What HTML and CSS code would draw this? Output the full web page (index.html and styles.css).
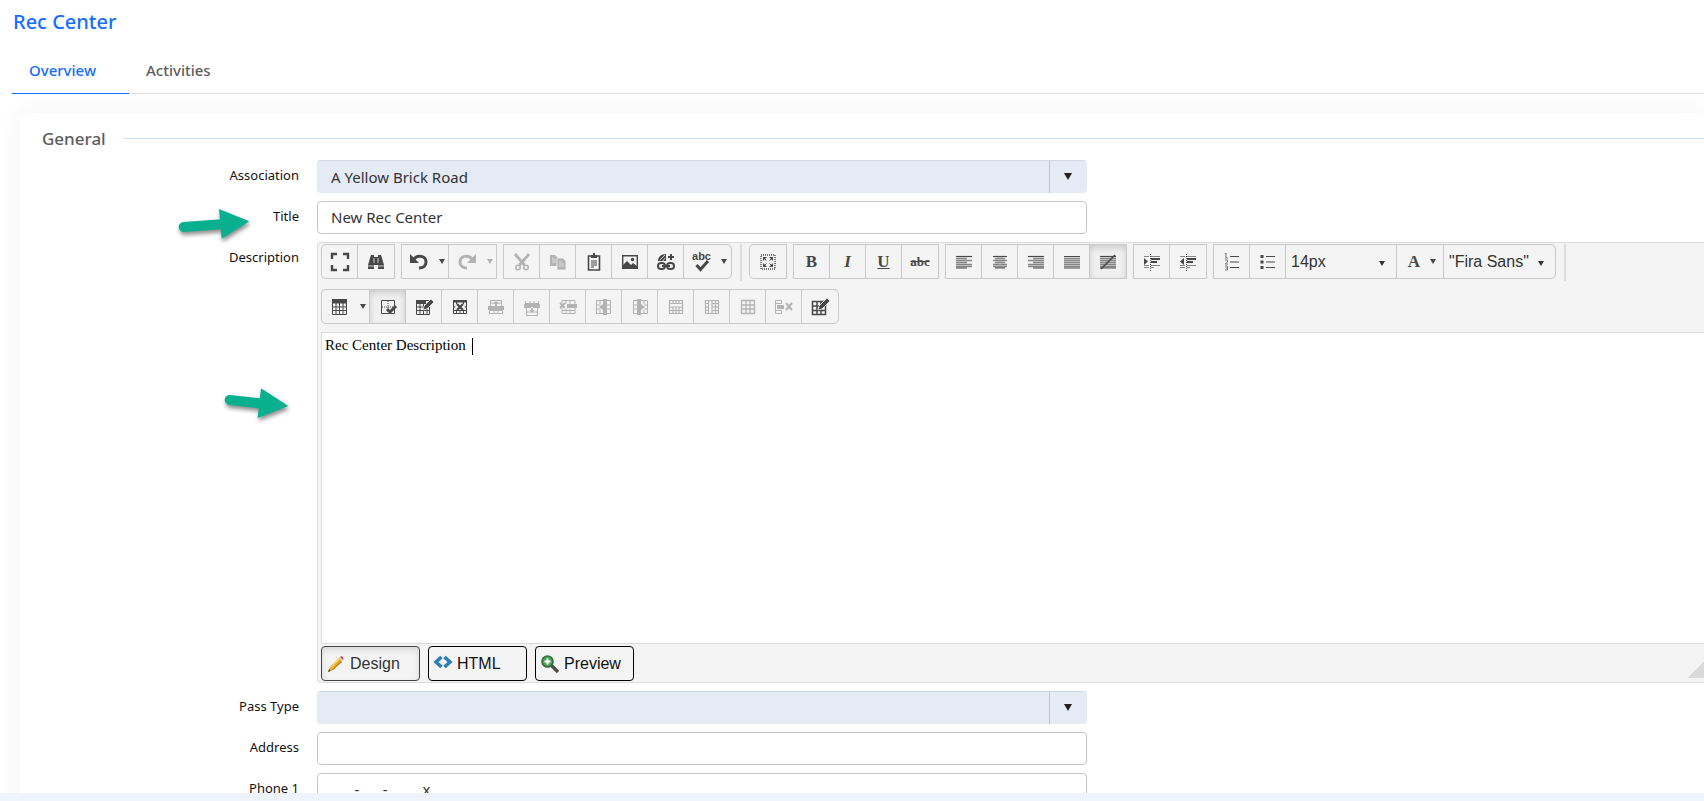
FILE: index.html
```html
<!DOCTYPE html>
<html lang="en">
<head>
  <meta charset="UTF-8">
  <title>Rec Center</title>
  <link rel="stylesheet" href="styles.css">
</head>
<body>

  <!-- icon sprite -->
  <svg class="sprite" aria-hidden="true">
    <symbol id="i-full" viewBox="0 0 20 20"><path d="M7 2H2v5M13 2h5v5M7 18H2v-5M13 18h5v-5" fill="none" stroke="currentColor" stroke-width="2.4"/></symbol>
    <symbol id="i-find" viewBox="0 0 20 20"><path d="M5 3h3v2h4V3h3l1 3 2 7v4h-6v-4H8v4H2v-4l2-7z"/><path d="M8 6v5M12 6v5M2 14h6M12 14h6" stroke="#f4f4f4" stroke-width=".8"/></symbol>
    <symbol id="i-undo" viewBox="0 0 20 20"><path d="M5 7c3-4 12-4 12 3 0 4-3 6-7 6" fill="none" stroke="currentColor" stroke-width="3"/><path d="M1 2v9h9z"/></symbol>
    <symbol id="i-redo" viewBox="0 0 20 20"><path d="M15 7C12 3 3 3 3 10c0 4 3 6 7 6" fill="none" stroke="currentColor" stroke-width="3"/><path d="M19 2v9h-9z"/></symbol>
    <symbol id="i-cut" viewBox="0 0 20 20"><path d="M3 2l9.500 11M17 2L7.500 13" fill="none" stroke="currentColor" stroke-width="2.800"/><circle cx="6" cy="15.500" r="2.200" fill="none" stroke="currentColor" stroke-width="1.600"/><circle cx="14" cy="15.500" r="2.200" fill="none" stroke="currentColor" stroke-width="1.600"/></symbol>
    <symbol id="i-copy" viewBox="0 0 20 20"><path d="M2 3h5l3 3v8H2z"/><path d="M9 6h6l3 3v9H9z" stroke="#f4f4f4" stroke-width=".8"/><path d="M4 6h2M4 8h4M4 10h4M11 10h3M11 12h5M11 14h5" stroke="#f4f4f4" stroke-width=".7"/></symbol>
    <symbol id="i-paste" viewBox="0 0 20 20"><path d="M4.500 4h11v14h-11z" fill="none" stroke="currentColor" stroke-width="1.600"/><path d="M7 6V3h2V1h2v2h2v3z"/><path d="M7 9h6M7 11h6M7 13h6M7 15h3" stroke="currentColor" stroke-width="1.200"/></symbol>
    <symbol id="i-image" viewBox="0 0 20 20"><path d="M2.700 3.700h14.600v12.600H2.700z" fill="none" stroke="currentColor" stroke-width="1.400"/><path d="M3 16v-3l4-4 4 4 2-2 4 3v2z"/><circle cx="12.500" cy="7.500" r="1.700"/></symbol>
    <symbol id="i-link" viewBox="0 0 20 20"><path d="M2 9c0-4 3-7 8-7v7z"/><path d="M4 8l5-5M7 9l2-3" stroke="#f4f4f4" stroke-width=".8"/><path d="M15 2v6M12 5h6" stroke="currentColor" stroke-width="2"/><rect x="2" y="11" width="7" height="6" rx="3" fill="none" stroke="currentColor" stroke-width="2"/><rect x="11" y="11" width="7" height="6" rx="3" fill="none" stroke="currentColor" stroke-width="2"/><path d="M6 14h8" stroke="currentColor" stroke-width="2"/></symbol>
    <symbol id="i-check" viewBox="0 0 16 12"><path d="M2.500 5l4 4.500L14 1" fill="none" stroke="currentColor" stroke-width="3"/></symbol>
    <symbol id="i-all" viewBox="0 0 20 20"><path d="M3 3h14v14H3z" fill="none" stroke="currentColor" stroke-width="1.400" stroke-dasharray="1 1"/><path d="M5 9V5h4zM15 9V5h-4zM5 11v4h4zM15 11v4h-4z"/><path d="M6 6l8 8M14 6l-8 8" stroke="currentColor" stroke-dasharray="3.500 4.300"/></symbol>
    <symbol id="i-left" viewBox="0 0 20 20"><path d="M2 4.500h16" stroke="currentColor" stroke-width="1.200"/><path d="M2 6.500h11M2 8.500h16M2 10.500h11M2 12.500h16M2 14.500h16M2 16h11" stroke="#858585" stroke-width="1.300"/></symbol>
    <symbol id="i-center" viewBox="0 0 20 20"><path d="M3 4.500h14" stroke="currentColor" stroke-width="1.200"/><path d="M5 6.500h10M3 8.500h14M5 10.500h10M3 12.500h14M3 14.500h14M5 16h10" stroke="#858585" stroke-width="1.300"/></symbol>
    <symbol id="i-right" viewBox="0 0 20 20"><path d="M2 4.500h16" stroke="currentColor" stroke-width="1.200"/><path d="M7 6.500h11M2 8.500h16M7 10.500h11M2 12.500h16M2 14.500h16M7 16h11" stroke="#858585" stroke-width="1.300"/></symbol>
    <symbol id="i-justify" viewBox="0 0 20 20"><path d="M2 4.500h16M2 16h16" stroke="currentColor" stroke-width="1.200"/><path d="M2 6.500h16M2 8.500h16M2 10.500h16M2 12.500h16M2 14.500h16" stroke="#858585" stroke-width="1.600"/></symbol>
    <symbol id="i-none" viewBox="0 0 20 20"><path d="M2 4.500h16" stroke="currentColor" stroke-width="1.200"/><path d="M2 6.500h16M2 8.500h16M2 10.500h16M2 12.500h16M2 14.500h16M2 16h16" stroke="#858585" stroke-width="1.300"/><path d="M3 17L17 3" stroke="currentColor" stroke-width="1.600"/></symbol>
    <symbol id="i-indent" viewBox="0 0 20 20"><path d="M2 4.500h5M2 13.500h5M2 15.500h5M9 4.500h9M9 13.500h9M9 15.500h3" stroke="#858585"/><path d="M9 7h9M9 10h6" stroke="currentColor" stroke-width="2"/><path d="M8.500 2v17" stroke="currentColor" stroke-dasharray="1 1"/><path d="M2 6l4 3.500L2 13z"/></symbol>
    <symbol id="i-outdent" viewBox="0 0 20 20"><path d="M2 4.500h5M2 13.500h5M2 15.500h5M9 4.500h9M9 13.500h9M9 15.500h3" stroke="#858585"/><path d="M9 7h9M9 10h6" stroke="currentColor" stroke-width="2"/><path d="M8.500 2v17" stroke="currentColor" stroke-dasharray="1 1"/><path d="M6 6L2 9.500 6 13z"/></symbol>
    <symbol id="i-ol" viewBox="0 0 20 20"><path d="M8 4.500h9M8 10h9M8 15.500h9" stroke="currentColor" stroke-width="1.200"/><path d="M3 2l1-1v5M3 6h3M3 8h2.500v2L3 12h3M3 14h2.500v4H3M3.500 16H5" fill="none" stroke="#777"/></symbol>
    <symbol id="i-ul" viewBox="0 0 20 20"><path d="M8 4.500h9M8 10h9M8 15.500h9" stroke="currentColor" stroke-width="1.200"/><path d="M2.500 3h3v3h-3zM2.500 8.500h3v3h-3zM2.500 14h3v3h-3z"/></symbol>
    <symbol id="i-table" viewBox="0 0 20 20"><path d="M2.500 2.500h14v15h-14zM2.500 10h14M2.500 13.500h14M6 6v11.500M9.500 6v11.500M13 6v11.500" fill="none" stroke="currentColor"/><path d="M2 2h15v4.500H2z"/></symbol>
    <symbol id="i-tcheck" viewBox="0 0 20 20"><path d="M3.500 3.500h13v13h-13z" fill="none" stroke="currentColor"/><path d="M10 4v12M4 10h12" stroke="currentColor" stroke-dasharray="1 1"/><path d="M9 12l3 3 6-6" fill="none" stroke="currentColor" stroke-width="3"/></symbol>
    <symbol id="i-tedit" viewBox="0 0 20 20"><path d="M2.500 3.500h13v14h-13zM2.500 10h13M2.500 13.500h13M6 6v11M9.500 6v11M13 6v11" fill="none" stroke="currentColor"/><path d="M2 3h10v4H2z"/><path d="M9 13l1-4 7-7 3 3-7 7z" stroke="#f4f4f4" stroke-width=".8"/></symbol>
    <symbol id="i-tdel" viewBox="0 0 20 20"><path d="M3.500 3.500h13v13h-13zM3.500 13.500h13M6.500 4v3M13.500 4v3M6.500 13v4M10 14v3M13.500 13v4M3.500 10h2M14.500 10h2" fill="none" stroke="currentColor"/><path d="M3 3h14v2.500H3z"/><path d="M7 7l6 6M13 7l-6 6" stroke="currentColor" stroke-width="2.200"/></symbol>
    <symbol id="i-rowup" viewBox="0 0 20 20"><path d="M4.500 9V3.500h11V9M3.500 13.500h13v3h-13zM8 13v4M12 13v4M4.500 6h11" fill="none" stroke="currentColor"/><path d="M2 9h16v4H2zM7.500 7L10 4l2.500 3H11v3H9V7z"/></symbol>
    <symbol id="i-rowdown" viewBox="0 0 20 20"><path d="M3.500 6.500h13M4.500 11v7.500h11V11M8 4v3M12 4v3M3.500 4v3M16.500 4v3M4.500 15h11" fill="none" stroke="currentColor"/><path d="M2 7h16v4H2zM7.500 13l2.500 3 2.500-3H11v-3H9v3z"/></symbol>
    <symbol id="i-rowdel" viewBox="0 0 20 20"><path d="M4 3.500h13v13H4zM4 13.500h13M8 4v3M12 4v3M8 12v5M12 12v5" fill="none" stroke="currentColor"/><path d="M9 7h10v4H9z"/><path d="M2 6l5 5M7 6l-5 5" stroke="currentColor" stroke-width="1.800"/></symbol>
    <symbol id="i-colleft" viewBox="0 0 20 20"><path d="M2.500 3.500h14v13h-14zM2.500 8h4M2.500 12h4M13 8h4M13 12h4M6 4v3M6 13v3" fill="none" stroke="currentColor"/><path d="M9 2h4v16H9zM9 7l-4 3 4 3z"/></symbol>
    <symbol id="i-colright" viewBox="0 0 20 20"><path d="M3.500 3.500h14v13h-14zM3.500 8h4M3.500 12h4M14 8h4M14 12h4M14 4v3M14 13v3" fill="none" stroke="currentColor"/><path d="M7 2h4v16H7zM11 7l4 3-4 3z"/></symbol>
    <symbol id="i-merge" viewBox="0 0 20 20"><path d="M3.500 3.500h13v13h-13zM3.500 6.500h13M3.500 13.500h13M3.500 10h13M7 3v3.500M10 3v3.500M13 3v3.500M7 10v7M10 10v7M13 10v7" fill="none" stroke="currentColor" stroke-width="1.200"/></symbol>
    <symbol id="i-mergev" viewBox="0 0 20 20"><path d="M3.500 3.500h13v13h-13zM6.500 3v14M10 3v14M13.500 3v14M3.500 6.500h3M3.500 10h3M3.500 13.500h3M10 6.500h7M10 10h7M10 13.500h7" fill="none" stroke="currentColor" stroke-width="1.200"/></symbol>
    <symbol id="i-split" viewBox="0 0 20 20"><path d="M3.500 3.500h13v13h-13zM8 3v14M12 3v14M3.500 8h13M3.500 12h13" fill="none" stroke="currentColor" stroke-width="1.300"/></symbol>
    <symbol id="i-celldel" viewBox="0 0 20 20"><path d="M1.500 3.500h6v3h-6zM1.500 13.500h6v3h-6zM1.500 6.500v7" fill="none" stroke="currentColor"/><path d="M3 8h7v4H3z"/><path d="M12 6l6 7M18 6l-6 7" stroke="currentColor" stroke-width="2"/></symbol>
    <symbol id="i-tprop" viewBox="0 0 20 20"><path d="M2.500 4.500h13v13h-13zM2.500 9h13M2.500 13.500h13M7 4v13M11 4v13" fill="none" stroke="currentColor" stroke-width="1.500"/><path d="M8 13l1-4 8-8 3 3-8 8z" stroke="#f4f4f4" stroke-width=".8"/></symbol>
    <symbol id="i-pencil" viewBox="0 0 20 20"><path d="M2 18l2-5L13 4l3 3-9 9z" fill="#e9a825"/><path d="M4 13l9-9 1 1-9 9z" fill="#f7d277"/><path d="M6 16l9-9 1 1-9 8z" fill="#b97a19"/><path d="M2 18l1-3 2 2z" fill="#5a4a3a"/><path d="M13 4l1-1 3 3-1 1z" fill="#c9cdd3"/><path d="M14 3c1-2 5 1 3 3z" fill="#c8504d"/></symbol>
    <symbol id="i-code" viewBox="0 0 20 20"><path d="M8.500 3L3 8l5.500 5M11.500 3L17 8l-5.500 5" fill="none" stroke="#2c7fb8" stroke-width="3.600"/></symbol>
    <symbol id="i-zoom" viewBox="0 0 20 20"><path d="M11 11l7 7" stroke="#4b4b4b" stroke-width="3.400"/><circle cx="7.500" cy="7.500" r="5.500" fill="#4fa05a" stroke="#2b7138" stroke-width="1.600"/><path d="M7.500 4.500v6M4.500 7.500h6" stroke="#fff" stroke-width="2"/></symbol>
  </svg>

  <main class="page">
    <h1 class="page-title">Rec Center</h1>

    <nav class="tabs">
      <a class="tab active" href="#overview">Overview</a>
      <a class="tab" href="#activities">Activities</a>
    </nav>

    <form class="card" id="overview">
      <h2 class="section-title">General</h2>

      <div class="row">
        <label for="association">Association</label>
        <div class="select-box">
          <select id="association"><option>A Yellow Brick Road</option></select>
        </div>
      </div>

      <div class="row">
        <label for="title">Title</label>
        <input class="text-box" type="text" id="title" value="New Rec Center">
      </div>

      <div class="row">
        <label id="desc-label">Description</label>
        <div class="editor">
          <div class="toolbar">
            <div class="group first">
              <button type="button" aria-label="Full screen"><svg><use href="#i-full"/></svg></button>
              <button type="button" aria-label="Find"><svg><use href="#i-find"/></svg></button>
            </div>
            <div class="group">
              <button type="button" class="drop" aria-label="Undo"><svg><use href="#i-undo"/></svg></button>
              <button type="button" class="drop" aria-label="Redo" disabled><svg><use href="#i-redo"/></svg></button>
            </div>
            <div class="group last">
              <button type="button" aria-label="Cut" disabled><svg><use href="#i-cut"/></svg></button>
              <button type="button" aria-label="Copy" disabled><svg><use href="#i-copy"/></svg></button>
              <button type="button" aria-label="Paste"><svg><use href="#i-paste"/></svg></button>
              <button type="button" aria-label="Insert image"><svg><use href="#i-image"/></svg></button>
              <button type="button" aria-label="Insert link"><svg><use href="#i-link"/></svg></button>
              <button type="button" class="drop" aria-label="Check spelling"><span class="spell">abc<svg><use href="#i-check"/></svg></span></button>
            </div>
            <span class="separator"></span>
            <div class="group first">
              <button type="button" aria-label="Select all"><svg><use href="#i-all"/></svg></button>
            </div>
            <div class="group">
              <button type="button" class="letter bold">B</button>
              <button type="button" class="letter italic">I</button>
              <button type="button" class="letter underline">U</button>
              <button type="button" class="letter strike">abc</button>
            </div>
            <div class="group">
              <button type="button" aria-label="Align left"><svg><use href="#i-left"/></svg></button>
              <button type="button" aria-label="Align center"><svg><use href="#i-center"/></svg></button>
              <button type="button" aria-label="Align right"><svg><use href="#i-right"/></svg></button>
              <button type="button" aria-label="Justify"><svg><use href="#i-justify"/></svg></button>
              <button type="button" class="pressed" aria-label="Remove alignment"><svg><use href="#i-none"/></svg></button>
            </div>
            <div class="group">
              <button type="button" aria-label="Indent"><svg><use href="#i-indent"/></svg></button>
              <button type="button" aria-label="Outdent"><svg><use href="#i-outdent"/></svg></button>
            </div>
            <div class="group last">
              <button type="button" aria-label="Numbered list"><svg><use href="#i-ol"/></svg></button>
              <button type="button" aria-label="Bullet list"><svg><use href="#i-ul"/></svg></button>
              <div class="tool-select"><select aria-label="Font size"><option>14px</option></select></div>
              <button type="button" class="letter drop">A</button>
              <div class="tool-select"><select aria-label="Font"><option>"Fira Sans"</option></select></div>
            </div>
            <span class="separator"></span>
            <div class="group first last">
              <button type="button" class="drop" aria-label="Insert table"><svg><use href="#i-table"/></svg></button>
              <button type="button" class="pressed" aria-label="Toggle table border"><svg><use href="#i-tcheck"/></svg></button>
              <button type="button" aria-label="Table properties"><svg><use href="#i-tedit"/></svg></button>
              <button type="button" aria-label="Delete table"><svg><use href="#i-tdel"/></svg></button>
              <button type="button" aria-label="Insert row above" disabled><svg><use href="#i-rowup"/></svg></button>
              <button type="button" aria-label="Insert row below" disabled><svg><use href="#i-rowdown"/></svg></button>
              <button type="button" aria-label="Delete row" disabled><svg><use href="#i-rowdel"/></svg></button>
              <button type="button" aria-label="Insert column left" disabled><svg><use href="#i-colleft"/></svg></button>
              <button type="button" aria-label="Insert column right" disabled><svg><use href="#i-colright"/></svg></button>
              <button type="button" aria-label="Merge horizontally" disabled><svg><use href="#i-merge"/></svg></button>
              <button type="button" aria-label="Merge vertically" disabled><svg><use href="#i-mergev"/></svg></button>
              <button type="button" aria-label="Split cell" disabled><svg><use href="#i-split"/></svg></button>
              <button type="button" aria-label="Delete cell" disabled><svg><use href="#i-celldel"/></svg></button>
              <button type="button" aria-label="Cell properties"><svg><use href="#i-tprop"/></svg></button>
            </div>
          </div>

          <div class="content" contenteditable="true" role="textbox" aria-labelledby="desc-label">Rec Center Description<span class="caret"></span></div>

          <div class="modes">
            <button type="button" class="pressed"><svg><use href="#i-pencil"/></svg>Design</button>
            <button type="button"><svg><use href="#i-code"/></svg>HTML</button>
            <button type="button"><svg><use href="#i-zoom"/></svg>Preview</button>
            <span class="resize"></span>
          </div>
        </div>
      </div>

      <div class="row">
        <label for="pass-type">Pass Type</label>
        <div class="select-box">
          <select id="pass-type"><option></option></select>
        </div>
      </div>

      <div class="row">
        <label for="address">Address</label>
        <input class="text-box" type="text" id="address">
      </div>

      <div class="row">
        <label for="phone1">Phone 1</label>
        <input class="text-box" type="text" id="phone1" value="      -      -         x">
      </div>
    </form>

    <!-- callout arrows -->
    <svg class="arrows" viewBox="0 0 450 690" aria-hidden="true">
      <path d="M41 81l112-8" stroke-width="30" stroke-linecap="round"/>
      <path d="M147 27l91 37-83 52z"/>
      <path d="M179 600l88 10" stroke-width="30" stroke-linecap="round"/>
      <path d="M273 565l82 53-92 36z"/>
    </svg>
  </main>

</body>
</html>
```

FILE: styles.css
```css
* { box-sizing: border-box; }
body { margin: 0; background: #eff3fc; font-family: "Noto Sans", sans-serif; color: #111; }
.sprite { position: absolute; width: 0; height: 0; }

.page { position: relative; height: calc(100vh - 8px); overflow: hidden; background: #fff; }
.page-title { margin: 0; padding: 8px 13px 0; font-size: 20px; line-height: 28px; font-weight: 500; color: #146eff; }

.tabs { display: flex; margin: 10px 0 0 12px; border-bottom: 1px solid #dcdcdc; }
.tab { padding: 12px 33px 11px 17px; margin-bottom: -1px; font-size: 15px; line-height: 24px; font-weight: 500; color: #5c5c5c; text-decoration: none; border-bottom: 1px solid transparent; }
.tab.active { color: #146eff; border-bottom-color: #146eff; }

.card { margin: 19px 0 0 20px; padding: 12px 0 20px 22px; background: #fff; border-radius: 6px 0 0 0; box-shadow: 0 0 30px rgba(0, 0, 0, 0.05); }
.section-title { display: flex; align-items: center; gap: 17px; margin: 0 0 8px; font-size: 17px; line-height: 27px; font-weight: 500; color: #5c5c5c; }
.section-title::after { content: ""; flex: 1; height: 1px; background: #c9def8; }

.row { display: grid; grid-template-columns: 257px minmax(0, 1fr); column-gap: 18px; margin-bottom: 8px; }
.row label { padding-top: 5px; font-size: 13px; line-height: 20px; text-align: right; }
.text-box, .select-box { width: 100%; max-width: 770px; height: 33px; border-radius: 4px; }
.text-box, .select-box select { font-family: inherit; font-size: 15px; color: #333; }
.text-box { padding: 0 13px 1px; border: 1px solid #c6c6c6; background: #fff; }

.select-box { position: relative; background: #e4ebf4; border-top: 1px solid #cfd9e4; }
.select-box select { width: 100%; height: 100%; padding: 0 14px 1px; appearance: none; border: 0; background: none; }
.select-box::after { content: ""; position: absolute; top: 12px; right: 15px; border: 4px solid transparent; border-top: 7px solid #222; border-bottom: 0; }
.select-box::before { content: ""; position: absolute; top: 0; bottom: 0; right: 37px; border-left: 1px solid #c0c4cb; }

/* rich text editor */
.editor { background: #f4f4f4; border: 1px solid #dcdcdc; border-right: 0; border-radius: 4px 0 0 4px; }
.toolbar { display: flex; flex-wrap: wrap; gap: 10px 6px; padding: 1px 3px 8px; }
.group { display: flex; height: 35px; border: 1px solid #c9c9c9; border-right: 0; }
.group > * { width: 36px; border: 0; border-right: 1px solid #c9c9c9; }
.group > :last-child { width: 37px; }
.group.first, .group.first > :first-child { border-radius: 5px 0 0 5px; }
.group.last, .group.last > :last-child { border-top-right-radius: 5px; border-bottom-right-radius: 5px; }
.group.first.last { border-radius: 5px; }
.group button { display: flex; align-items: center; justify-content: center; padding: 0; background: none; color: #484848; }
.group button:disabled { color: #b3b3b3; }
.group svg { width: 20px; height: 20px; fill: currentColor; }
.group .drop { width: 47px; gap: 10px; padding-left: 4px; }
.group .drop:last-child, .group.first .drop { width: 48px; }
.group .drop::after, .tool-select::after { content: ""; border: 3px solid transparent; border-top: 5px solid currentColor; border-bottom: 0; }
.group .pressed { background: #f0f0f0; box-shadow: inset 0 3px 6px rgba(0, 0, 0, 0.15); }
.separator { width: 2px; height: 37px; margin: 0 1px -2px 2px; background: #dcdcdc; }

.letter { font-family: "Liberation Serif", serif; font-size: 17px; font-weight: bold; }
.italic { font-style: italic; }
.underline { text-decoration: underline; }
.strike { font-size: 13px; text-decoration: line-through; }
.spell { display: flex; flex-direction: column; align-items: center; font: bold 11px/8px "Liberation Sans", sans-serif; }
.group .spell svg { width: 16px; height: 12px; }

.group .tool-select { position: relative; width: 111px; color: #333; }
.group .tool-select:last-child { width: 112px; }
.tool-select select { width: 100%; height: 100%; padding: 0 5px; appearance: none; border: 0; background: none; font: 16px "Liberation Sans", sans-serif; color: #333; }
.tool-select::after { position: absolute; top: 16px; right: 11px; }

.content { height: 312px; margin-left: 3px; padding: 2px 3px; background: #fff; border: 1px solid #dcdcdc; border-right: 0; font: 15px/20px "Liberation Serif", serif; color: #000; outline: 0; }
.caret { display: inline-block; width: 1px; height: 17px; margin-left: 6px; background: #000; vertical-align: middle; }

.modes { display: flex; gap: 8px; padding: 2px 0 1px 3px; }
.modes button { display: flex; align-items: center; gap: 4px; width: 99px; height: 35px; padding: 1px 4px 0; border: 1px solid #000; border-radius: 4px; background: #f4f4f4; font: 16px "Liberation Sans", sans-serif; color: #111; }
.modes button.pressed { border-color: #444; color: #333; box-shadow: inset 0 3px 6px rgba(0, 0, 0, 0.12); }
.modes svg { width: 20px; height: 20px; }
.resize { align-self: flex-end; width: 16px; height: 16px; margin: 0 0 3px auto; background: linear-gradient(135deg, transparent 50%, #d9d9d9 50%); }

.arrows { position: absolute; left: 170px; top: 200px; width: 150px; height: 230px; overflow: visible; fill: #09b090; stroke: #09b090; stroke-width: 0; filter: drop-shadow(1px 3px 2px rgba(0, 0, 0, 0.45)); pointer-events: none; }
```
